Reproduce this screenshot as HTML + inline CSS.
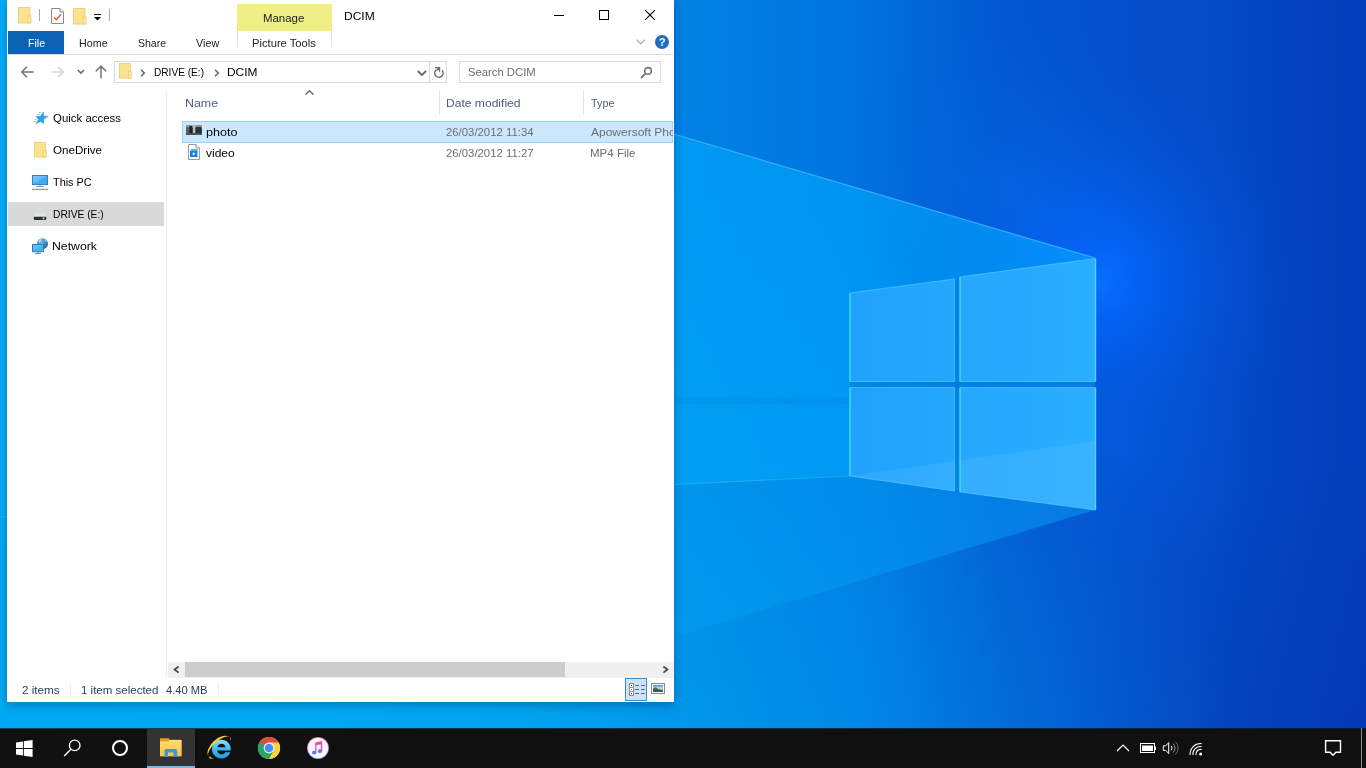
<!DOCTYPE html>
<html>
<head>
<meta charset="utf-8">
<title>DCIM</title>
<style>
*{box-sizing:border-box;margin:0;padding:0}
html,body{width:1366px;height:768px;overflow:hidden;background:#0a64d0;font-family:"Liberation Sans",sans-serif;font-size:12px;color:#000}
.abs{position:absolute}
#wall{position:absolute;left:0;top:0;width:1366px;height:728px}
#win{position:absolute;left:7px;top:0;width:667px;height:702px;background:#fff;box-shadow:0 3px 9px rgba(0,30,80,.34)}
#taskbar{position:absolute;left:0;top:728px;width:1366px;height:40px;background:#101010}
.t{position:absolute;white-space:nowrap;font-size:11.5px;line-height:14px;height:14px;transform-origin:0 0}
.tab{color:#222}
.nav{color:#000}
.hdr{color:#4c607a}
.gry{color:#6d6d6d}
</style>
</head>
<body>
<!-- WALLPAPER -->
<svg id="wall" viewBox="0 0 1366 728">
<defs>
<linearGradient id="bg" x1="0" y1="0" x2="1366" y2="0" gradientUnits="userSpaceOnUse">
<stop offset="0" stop-color="#00aaf4"/>
<stop offset="0.25" stop-color="#00a8f0"/>
<stop offset="0.38" stop-color="#009cec"/>
<stop offset="0.493" stop-color="#0082e4"/>
<stop offset="0.622" stop-color="#0074e0"/>
<stop offset="0.732" stop-color="#0258d0"/>
<stop offset="0.805" stop-color="#0450cc"/>
<stop offset="0.878" stop-color="#044cc8"/>
<stop offset="1" stop-color="#043cba"/>
</linearGradient>
<radialGradient id="bl" cx="500" cy="900" r="760" gradientUnits="userSpaceOnUse">
<stop offset="0" stop-color="#00a8f0" stop-opacity=".82"/>
<stop offset="1" stop-color="#00a8f0" stop-opacity="0"/>
</radialGradient>
<radialGradient id="br" cx="1366" cy="760" r="300" gradientUnits="userSpaceOnUse">
<stop offset="0" stop-color="#0434a8" stop-opacity=".45"/>
<stop offset="1" stop-color="#0434a8" stop-opacity="0"/>
</radialGradient>
<radialGradient id="glow" cx="1098" cy="282" r="215" gradientUnits="userSpaceOnUse">
<stop offset="0" stop-color="#0a70ff" stop-opacity=".95"/>
<stop offset=".16" stop-color="#0468ff" stop-opacity=".80"/>
<stop offset=".5" stop-color="#0462f4" stop-opacity=".36"/>
<stop offset=".78" stop-color="#0458e0" stop-opacity=".12"/>
<stop offset="1" stop-color="#0450d0" stop-opacity="0"/>
</radialGradient>
<radialGradient id="glow2" cx="1120" cy="445" r="135" gradientUnits="userSpaceOnUse">
<stop offset="0" stop-color="#0462e8" stop-opacity=".55"/>
<stop offset="1" stop-color="#0458d8" stop-opacity="0"/>
</radialGradient>
<radialGradient id="glow3" cx="1010" cy="185" r="170" gradientUnits="userSpaceOnUse">
<stop offset="0" stop-color="#0870e6" stop-opacity=".45"/>
<stop offset="1" stop-color="#0460d8" stop-opacity="0"/>
</radialGradient>
<linearGradient id="beam" x1="674" y1="0" x2="1095" y2="0" gradientUnits="userSpaceOnUse">
<stop offset="0" stop-color="#00b0ff" stop-opacity=".50"/>
<stop offset=".6" stop-color="#00aeff" stop-opacity=".56"/>
<stop offset="1" stop-color="#08a8ff" stop-opacity=".60"/>
</linearGradient>
<linearGradient id="beamlo" x1="520" y1="0" x2="1095" y2="0" gradientUnits="userSpaceOnUse">
<stop offset="0" stop-color="#00acfc" stop-opacity="0"/>
<stop offset=".25" stop-color="#00acfc" stop-opacity=".2"/>
<stop offset="1" stop-color="#08a8fc" stop-opacity=".46"/>
</linearGradient>
<linearGradient id="pane" x1="850" y1="0" x2="1095" y2="0" gradientUnits="userSpaceOnUse">
<stop offset="0" stop-color="#20a2fc"/>
<stop offset="1" stop-color="#2aaeff"/>
</linearGradient>
</defs>
<rect width="1366" height="728" fill="url(#bg)"/>
<rect width="1366" height="728" fill="url(#bl)"/>
<rect width="1366" height="728" fill="url(#br)"/>
<rect width="1366" height="728" fill="url(#glow3)"/>
<rect width="1366" height="728" fill="url(#glow2)"/>
<rect width="1366" height="728" fill="url(#glow)"/>
<!-- light cone -->
<polygon points="0,-64 1095,258 1095,510 850,476 0,517" fill="url(#beam)"/>
<polygon points="0,517 850,476 1095,510 0,840" fill="url(#beamlo)"/>
<line x1="0" y1="-64" x2="1095" y2="258" stroke="#48c0ff" stroke-width="1.2" opacity=".7"/>
<line x1="0" y1="517" x2="850" y2="476" stroke="#40c0ff" stroke-width="1.2" opacity=".45"/>
<rect x="674" y="397" width="178" height="7" fill="#0668d0" opacity=".12"/>
<!-- logo panes -->
<rect x="850" y="382" width="245.500" height="5.500" fill="#0670d8" opacity=".45"/>
<polygon points="955,279 960,277 960,492 955,491" fill="#0670d8" opacity=".35"/>
<g fill="url(#pane)">
<polygon points="850,293 954.5,279 954.5,381.5 850,381.5"/>
<polygon points="960,277 1095.5,258.5 1095.5,381.5 960,381.5"/>
<polygon points="850,387.5 954.5,387.5 954.5,491 850,476"/>
<polygon points="960,387.5 1095.5,387.5 1095.5,510 960,492"/>
</g>
<path d="M850,476L954.500,461V491ZM960,460.300L1095.500,441V510L960,492Z" fill="#fff" opacity=".07"/>
<g fill="none" stroke="#6cd0ff" stroke-width="1" opacity=".55">
<path d="M850,293L954.500,279V381.500H850M960,277L1095.500,258.500M960,381.500H1095.500M850,387.500H954.500V491L850,476M960,387.500H1095.500M1095.500,510L960,492"/>
</g>
<g fill="none" stroke="#44dcf2" stroke-width="1.500">
<path d="M850,293V381.500M850,387.500V476M960,277V381.500M960,387.500V492" opacity=".95"/>
<path d="M1095.500,258.500V381.500M1095.500,387.500V510" stroke="#5ad8ff" opacity=".9"/>
</g>
</svg>

<!-- WINDOW -->
<div id="win">
<svg class="abs" style="left:11px;top:7px" width="14" height="17" viewBox="0 0 14 17"><rect x=".5" y=".5" width="11.5" height="15.5" fill="#fbe28e" stroke="#ecd078"/><rect x="10" y="9" width="3" height="7" fill="#fce9a6" stroke="#ecd078"/></svg>
<div class="abs" style="left:32px;top:9px;width:1px;height:12px;background:#a9a9a9"></div>
<svg class="abs" style="left:44px;top:8px" width="13" height="16" viewBox="0 0 13 16"><path d="M.5.5H9L12.5 4V15.5H.5Z" fill="#fff" stroke="#8a8a8a"/><path d="M9 .5V4H12.5" fill="#f2f2f2" stroke="#8a8a8a"/><path d="M3 9.2L5.3 11.6L10 6.2" fill="none" stroke="#e8622c" stroke-width="1.5"/></svg>
<svg class="abs" style="left:66px;top:8px" width="14" height="17" viewBox="0 0 14 17"><rect x=".5" y=".5" width="11.5" height="15.5" fill="#fbe28e" stroke="#ecd078"/><rect x="10" y="9" width="3" height="7" fill="#fce9a6" stroke="#ecd078"/></svg>
<svg class="abs" style="left:87px;top:13px" width="8" height="8" viewBox="0 0 8 8"><rect x="0" y="1" width="7" height="1" fill="#000"/><path d="M0 4H7L3.5 7.5Z" fill="#000"/></svg>
<div class="abs" style="left:102px;top:9px;width:1px;height:12px;background:#a9a9a9"></div>
<div class="abs" style="left:230px;top:4px;width:95px;height:27px;background:#f0ee86"></div>
<span class="t tab" style="left:255.60px;top:11.40px;transform:scaleX(0.9937);">Manage</span>
<span class="t " style="left:337.00px;top:9.10px;transform:scaleX(1.0431);">DCIM</span>
<div class="abs" style="left:547px;top:15px;width:10px;height:1px;background:#000"></div>
<div class="abs" style="left:592px;top:10px;width:10px;height:10px;border:1px solid #000"></div>
<svg class="abs" style="left:638px;top:10px" width="10" height="10" viewBox="0 0 10 10"><path d="M0 0L10 10M10 0L0 10" stroke="#000" stroke-width="1.1"/></svg>
<div class="abs" style="left:1px;top:31px;width:56px;height:23px;background:#0c63b4"></div>
<span class="t " style="left:20.60px;top:36.20px;transform:scaleX(0.9172);color:#fff">File</span>
<span class="t tab" style="left:71.70px;top:36.20px;transform:scaleX(0.9320);">Home</span>
<span class="t tab" style="left:130.50px;top:36.20px;transform:scaleX(0.9122);">Share</span>
<span class="t tab" style="left:188.50px;top:36.20px;transform:scaleX(0.9436);">View</span>
<div class="abs" style="left:230px;top:31px;width:95px;height:19px;border-left:1px solid #dadbdc;border-right:1px solid #dadbdc;-webkit-mask-image:linear-gradient(#000 40%,transparent);mask-image:linear-gradient(#000 40%,transparent)"></div>
<span class="t tab" style="left:244.50px;top:36.20px;transform:scaleX(0.9737);">Picture Tools</span>
<svg class="abs" style="left:628.5px;top:39px" width="10" height="6" viewBox="0 0 10 6"><path d="M.5.7L4.7 4.9L8.9.7" fill="none" stroke="#a8a8a8" stroke-width="1.2"/></svg>
<div class="abs" style="left:648px;top:35px;width:14px;height:14px;border-radius:7px;background:#1b6ec2;color:#fff;font-weight:bold;font-size:11px;line-height:14px;text-align:center">?</div>
<div class="abs" style="left:1px;top:54px;width:665px;height:1px;background:#dadbdc"></div>
<svg class="abs" style="left:13.5px;top:66px" width="13" height="12" viewBox="0 0 13 12"><path d="M6 .8L.9 6L6 11.2M1 6H12.6" fill="none" stroke="#737373" stroke-width="1.5"/></svg>
<svg class="abs" style="left:43.5px;top:66px" width="13" height="12" viewBox="0 0 13 12"><path d="M7 .8L12.1 6L7 11.2M12 6H.4" fill="none" stroke="#d6d6d6" stroke-width="1.5"/></svg>
<svg class="abs" style="left:69.5px;top:69px" width="8" height="6" viewBox="0 0 8 6"><path d="M.8 1L3.9 4.1L7 1" fill="none" stroke="#707070" stroke-width="1.6"/></svg>
<svg class="abs" style="left:88px;top:65px" width="12" height="14" viewBox="0 0 12 14"><path d="M.8 6.3L6 1.1L11.2 6.3M6 1.3V13.4" fill="none" stroke="#737373" stroke-width="1.5"/></svg>
<div class="abs" style="left:107px;top:61px;width:333px;height:22px;border:1px solid #d9d9d9"></div>
<svg class="abs" style="left:112px;top:63px" width="13.2" height="16" viewBox="0 0 14 17"><rect x=".5" y=".5" width="11.5" height="15.5" fill="#fbe28e" stroke="#ecd078"/><rect x="10" y="9" width="3" height="7" fill="#fce9a6" stroke="#ecd078"/></svg>
<svg class="abs" style="left:133px;top:69px" width="6" height="8" viewBox="0 0 6 8"><path d="M1 .8L4.3 4L1 7.2" fill="none" stroke="#6a6a6a" stroke-width="1.6"/></svg>
<span class="t " style="left:147.30px;top:65.10px;transform:scaleX(0.8792);">DRIVE (E:)</span>
<svg class="abs" style="left:207px;top:69px" width="6" height="8" viewBox="0 0 6 8"><path d="M1 .8L4.3 4L1 7.2" fill="none" stroke="#6a6a6a" stroke-width="1.6"/></svg>
<span class="t " style="left:220.00px;top:65.10px;transform:scaleX(1.0361);">DCIM</span>
<svg class="abs" style="left:410px;top:70px" width="10" height="7" viewBox="0 0 10 7"><path d="M.8 1L4.9 5.1L9 1" fill="none" stroke="#666" stroke-width="1.8"/></svg>
<div class="abs" style="left:422px;top:62px;width:1px;height:20px;background:#d9d9d9"></div>
<svg class="abs" style="left:426px;top:65px" width="12" height="14" viewBox="433 65 12 14"><path d="M442.1 70.3A4.2 4.2 0 1 1 436 70.1" fill="none" stroke="#6b6b6b" stroke-width="1.5"/><path d="M435 67.6H439.5V71.8M436.3 70.6L439.3 67.8" fill="none" stroke="#6b6b6b" stroke-width="1.4"/></svg>
<div class="abs" style="left:452px;top:61px;width:202px;height:22px;border:1px solid #d9d9d9"></div>
<span class="t gry" style="left:461.20px;top:65.10px;transform:scaleX(0.9808);">Search DCIM</span>
<svg class="abs" style="left:633px;top:66px" width="13" height="13" viewBox="0 0 13 13"><circle cx="8" cy="4.900" r="3.300" fill="none" stroke="#767676" stroke-width="1.600"/><path d="M5.600 7.400L1 12" stroke="#767676" stroke-width="1.900"/></svg>
<svg class="abs" style="left:298px;top:90px" width="9" height="5" viewBox="0 0 9 5"><path d="M.5 4.5L4.5.7L8.5 4.5" fill="none" stroke="#5a5a5a" stroke-width="1.2"/></svg>
<span class="t hdr" style="left:177.60px;top:95.80px;transform:scaleX(1.0778);">Name</span>
<span class="t hdr" style="left:438.60px;top:95.80px;transform:scaleX(1.0503);">Date modified</span>
<span class="t hdr" style="left:583.70px;top:95.80px;transform:scaleX(0.9384);">Type</span>
<div class="abs" style="left:432px;top:90px;width:1px;height:25px;background:#e5e5e5"></div>
<div class="abs" style="left:576px;top:90px;width:1px;height:25px;background:#e5e5e5"></div>
<div class="abs" style="left:159px;top:90px;width:1px;height:588px;background:#f0f0f0"></div>
<div class="abs" style="left:1px;top:202px;width:156px;height:24px;background:#d9d9d9"></div>
<svg class="abs" style="left:25px;top:110px" width="18" height="16" viewBox="32 110 18 16"><path d="M43.30 112.10L43.59 116.22L47.80 116.30L43.65 119.36L43.50 123.50L40.46 121.39L36.20 123.70L38.42 119.42L36.10 116.30L40.38 116.22Z" fill="#2da2f2" stroke="#1f8ad8" stroke-width=".5"/><path d="M38.800 112.500H41.200M37.500 114.500H39.900M34.700 119.500H36.700M33.300 121.500H35.900" stroke="#8cc0e8" stroke-width=".9"/></svg>
<span class="t " style="left:46.00px;top:111.00px;transform:scaleX(0.9944);">Quick access</span>
<svg class="abs" style="left:27px;top:142px" width="13.2" height="16" viewBox="0 0 14 17"><rect x=".5" y=".5" width="11.5" height="15.5" fill="#fbe28e" stroke="#ecd078"/><rect x="10" y="9" width="3" height="7" fill="#fce9a6" stroke="#ecd078"/></svg>
<span class="t " style="left:46.00px;top:142.90px;transform:scaleX(1.0088);">OneDrive</span>
<svg class="abs" style="left:24px;top:174px" width="18" height="17" viewBox="31 174 18 17"><defs><linearGradient id="scr" x1="0" y1="0" x2="1" y2="1"><stop offset="0" stop-color="#84ccfc"/><stop offset=".5" stop-color="#5cb8f8"/><stop offset=".52" stop-color="#44acf6"/><stop offset="1" stop-color="#38a6f6"/></linearGradient></defs><rect x="32.500" y="175.500" width="15" height="9" fill="url(#scr)" stroke="#3a80b2"/><rect x="39" y="185" width="2" height="1" fill="#9cc4e4"/><rect x="36" y="186" width="8" height="1" fill="#7c9cba"/><rect x="32" y="188" width="16" height="1" fill="#dde4ea"/><rect x="32" y="189" width="16" height="1" fill="#8fa0b0"/></svg>
<span class="t " style="left:46.00px;top:174.90px;transform:scaleX(0.9436);">This PC</span>
<svg class="abs" style="left:26px;top:212px" width="14" height="9" viewBox="33 212 14 9"><path d="M35.300 213.200H44.700L46.100 217H33.900Z" fill="#e6e6e6"/><rect x="33.900" y="216.800" width="12.200" height="3.200" rx=".4" fill="#2a2a2a"/><rect x="34.500" y="218" width="7.500" height=".5" fill="#4a4a4a"/><circle cx="43.500" cy="218.400" r="1.600" fill="#2f9a3c" opacity=".7"/><circle cx="43.500" cy="218.400" r=".9" fill="#7cf08a"/></svg>
<span class="t " style="left:46.00px;top:206.90px;transform:scaleX(0.8917);">DRIVE (E:)</span>
<svg class="abs" style="left:24px;top:237px" width="18" height="18" viewBox="31 237 18 18"><defs><radialGradient id="glb" cx=".35" cy=".3" r=".8"><stop offset="0" stop-color="#7cc0e4"/><stop offset=".6" stop-color="#3c88b8"/><stop offset="1" stop-color="#28587c"/></radialGradient></defs><circle cx="42.500" cy="243.700" r="5.500" fill="url(#glb)"/><path d="M38.600 241.800C39.200 239.800 40.800 238.900 42 239C41.600 240 40.600 240.300 40.400 241.400C40 242.300 39.200 242.400 38.600 241.800ZM44.600 239.300C46 239.800 47 241 47.400 242.400C46.600 242.200 46.300 241.200 45.400 240.800C44.800 240.300 44.400 239.900 44.600 239.300Z" fill="#c4e8f8" opacity=".9"/><rect x="32.500" y="244.500" width="11" height="7.200" fill="#4cb0f6" stroke="#2e7eb8"/><path d="M33 245H43L33 251Z" fill="#6cc0fa" opacity=".6"/><rect x="37" y="252" width="2" height="1" fill="#8cb8dc"/><rect x="35" y="253" width="6" height="1" fill="#7a8a9a"/></svg>
<span class="t " style="left:45.00px;top:238.90px;transform:scaleX(1.0669);">Network</span>
<div class="abs" style="left:175px;top:121px;width:491px;height:22px;background:#cce8ff;border:1px solid #99d1ff"></div>
<svg class="abs" style="left:179px;top:125px" width="16" height="10" viewBox="0 0 16 10"><rect width="16" height="10" fill="#3a4248"/><rect x="0" y="0" width="16" height="2.5" fill="#8c969c"/><rect x="3.5" y="1" width="2.5" height="7" fill="#1e2428"/><rect x="7" y="0" width="2.2" height="8" fill="#b8c0c4"/><rect x="10" y="2" width="5" height="6" fill="#2a3238"/><rect x="0" y="8" width="16" height="2" fill="#4a5258"/><rect x="0" y="3" width="3" height="5" fill="#5a646a"/></svg>
<span class="t " style="left:199.30px;top:125.40px;transform:scaleX(1.0946);">photo</span>
<span class="t gry" style="left:439.30px;top:125.40px;transform:scaleX(0.9867);">26/03/2012 11:34</span>
<div class="abs" style="left:583.7px;top:125px;width:81.9px;height:14px;overflow:hidden"><span class="t gry" style="left:0;top:.36px;transform:scaleX(1.0435)">Apowersoft Photo Viewer</span></div>
<svg class="abs" style="left:181px;top:144px" width="12" height="16" viewBox="0 0 12 16"><path d="M.5.5H8L11.5 4V15.5H.5Z" fill="#fff" stroke="#9a9a9a"/><path d="M8 .5V4H11.5" fill="#f0f0f0" stroke="#9a9a9a"/><rect x="2" y="6.5" width="7.5" height="6.5" fill="#1b7fd6"/><rect x="3.2" y="5" width="6.5" height="2" fill="#58b0f0"/><path d="M4.8 8.2L7.6 9.8L4.8 11.4Z" fill="#fff"/></svg>
<span class="t " style="left:199.00px;top:146.00px;transform:scaleX(1.0438);">video</span>
<span class="t gry" style="left:439.30px;top:146.00px;transform:scaleX(0.9867);">26/03/2012 11:27</span>
<span class="t gry" style="left:582.70px;top:146.00px;transform:scaleX(1.0015);">MP4 File</span>
<div class="abs" style="left:161px;top:662px;width:505px;height:16px;background:#f0f0f0"></div>
<div class="abs" style="left:178px;top:662px;width:380px;height:15px;background:#cdcdcd"></div>
<svg class="abs" style="left:165.5px;top:666px" width="7" height="8" viewBox="0 0 7 8"><path d="M5.6 .6L1.6 3.6L5.6 6.6" fill="none" stroke="#454545" stroke-width="1.8"/></svg>
<svg class="abs" style="left:654.5px;top:666px" width="7" height="8" viewBox="0 0 7 8"><path d="M1.4 .6L5.4 3.6L1.4 6.6" fill="none" stroke="#454545" stroke-width="1.8"/></svg>
<span class="t " style="left:15.20px;top:683.10px;transform:scaleX(1.0141);color:#1e395b">2 items</span>
<div class="abs" style="left:63px;top:684px;width:1px;height:11px;background:#ececec"></div>
<span class="t " style="left:74.40px;top:683.10px;transform:scaleX(1.0009);color:#1e395b">1 item selected</span>
<span class="t " style="left:158.90px;top:683.10px;transform:scaleX(0.9688);color:#1e395b">4.40 MB</span>
<div class="abs" style="left:211px;top:684px;width:1px;height:11px;background:#ececec"></div>
<div class="abs" style="left:618px;top:678px;width:22px;height:23px;background:#cce4f6;border:1px solid #3d8cc2"></div>
<svg class="abs" style="left:622px;top:683px" width="17" height="14" viewBox="629 683 17 14"><rect x="629.500" y="683.500" width="4" height="12" fill="#fff" stroke="#8e8e8e"/><rect x="630" y="687" width="3" height="1" fill="#9a9a9a"/><rect x="630" y="691" width="3" height="1" fill="#9a9a9a"/><rect x="631" y="685" width="1" height="1" fill="#7a2a2a"/><rect x="631" y="689" width="1" height="1" fill="#8494b4"/><rect x="631" y="693" width="1" height="1" fill="#7a2a2a"/><g fill="#5a6a7a"><rect x="635" y="685" width="4" height="1"/><rect x="641" y="685" width="4" height="1"/><rect x="635" y="689" width="4" height="1"/><rect x="641" y="689" width="4" height="1"/><rect x="635" y="693" width="4" height="1"/><rect x="641" y="693" width="4" height="1"/></g></svg>
<svg class="abs" style="left:644px;top:683px" width="14" height="11" viewBox="651 683 14 11"><defs><linearGradient id="sky" x1="0" y1="0" x2="0" y2="1"><stop offset="0" stop-color="#4f88d0"/><stop offset=".45" stop-color="#d0e2f2"/><stop offset=".7" stop-color="#7a9cb8"/><stop offset="1" stop-color="#2c4c70"/></linearGradient></defs><rect x="651.500" y="683.500" width="13" height="10" fill="#fff" stroke="#8a8a8a"/><rect x="653" y="685" width="10" height="7" fill="url(#sky)"/><path d="M653 692V688.500L655.500 687.300L659 689.500L663 691V692Z" fill="#2f5a48" opacity=".85"/></svg>
</div>

<!-- TASKBAR -->
<div id="taskbar">
<div class="abs" style="left:0;top:0;width:1366px;height:1px;background:linear-gradient(90deg,#0a4468,#06305c 50%,#03184a)"></div>
<svg class="abs" style="left:16px;top:12px" width="17" height="17" viewBox="0 0 17 17"><path d="M0 2.4L6.9 1.4V8H0ZM7.8 1.3L16.6 0V8H7.8ZM0 8.9H6.9V15.5L0 14.5ZM7.8 8.9H16.6V17L7.8 15.7Z" fill="#fff"/></svg>
<svg class="abs" style="left:62px;top:10px" width="20" height="20" viewBox="62 738 20 20"><circle cx="74.7" cy="745.4" r="5.3" fill="none" stroke="#fff" stroke-width="1.3"/><path d="M70.9 749.3L64.2 756" stroke="#fff" stroke-width="1.4"/></svg>
<div class="abs" style="left:112px;top:12px;width:16px;height:16px;border-radius:8px;border:2px solid #fff"></div>
<div class="abs" style="left:147px;top:1px;width:48px;height:39px;background:#333"></div>
<div class="abs" style="left:147px;top:38px;width:48px;height:2px;background:#76b9ed"></div>
<svg class="abs" style="left:159px;top:10px" width="24" height="20" viewBox="159 738 24 20"><defs><linearGradient id="fb" x1="0" y1="0" x2="0" y2="1"><stop offset="0" stop-color="#ffdc70"/><stop offset="1" stop-color="#f8c648"/></linearGradient></defs><path d="M160 738.200H168.600L169.800 739.700H181.500V756.200H160Z" fill="#e3a11c"/><path d="M160 741.400H168.400L169.600 739.900H181.500V756.200H160Z" fill="url(#fb)"/><path d="M164.4 757V750.6Q164.4 749 166 749H175.6Q177.2 749 177.2 750.6V757H173.5V752.6H168V757Z" fill="#3d97df"/></svg>
<svg class="abs" style="left:207px;top:7px" width="26" height="26" viewBox="207 735 26 26"><defs><linearGradient id="ie" x1="0" y1="0" x2="0" y2="1"><stop offset="0" stop-color="#8be0fb"/><stop offset=".5" stop-color="#3dbbf1"/><stop offset="1" stop-color="#1c9ce4"/></linearGradient></defs><path d="M230.6 750.4H217.3C217.5 752.8 219.3 754.3 221.6 754.3C223.3 754.3 224.7 753.5 225.4 752.2H230.2C229 756 225.6 758.5 221.4 758.5C216.2 758.5 212 754.4 212 749.2C212 744 216.200 739.8 221.400 739.8C226.600 739.8 230.8 744 230.8 749.2C230.8 749.6 230.700 750 230.600 750.4ZM217.4 747.3H225.600C225.3 745.2 223.600 743.800 221.500 743.800C219.400 743.800 217.700 745.200 217.400 747.300Z" fill="url(#ie)"/><defs><linearGradient id="ier" x1="0" y1="0" x2="1" y2="1"><stop offset="0" stop-color="#ffe27a"/><stop offset=".5" stop-color="#f2c226"/><stop offset="1" stop-color="#d89c0c"/></linearGradient></defs><path d="M230.3 737.6A14.300 8.500 -42 0 0 209 757.200A14.300 6.300 -42 0 1 230.300 737.600Z" fill="url(#ier)"/><path d="M209 757.200C209.300 758.900 211.800 759.200 214.200 758.100C212.300 758.100 210.600 757.900 210.300 756.200Z" fill="#e0a818"/><path d="M230.300 737.600C231.200 738.600 231.100 740 230.700 741.300C230.600 739.800 230.400 738.700 229.600 738Z" fill="#e0a818"/></svg>
<svg class="abs" style="left:257px;top:8px" width="24" height="24" viewBox="-12 -12 24 24"><circle r="11.1" fill="#fdd23f"/><path d="M0 0L-9.61 -5.55A11.1 11.1 0 0 1 9.61 -5.55Z" fill="#e2493a"/><path d="M0 0L-9.61 -5.55A11.1 11.1 0 0 0 0 11.1L4.6 2.6Z" fill="#22a565"/><path d="M0 0L9.61 -5.55L0 -5.55Z" fill="#e2493a"/><path d="M-9.61 -5.55L-4.7 2.7L0 0Z" fill="#22a565"/><path d="M0 11.1L4.7 2.7L0 0L-4.7 2.7Z" fill="#22a565"/><path d="M0 11.1A11.1 11.1 0 0 0 9.61 -5.55H0L4.7 2.7Z" fill="#fdd23f"/><circle r="5.4" fill="#f4f8fc"/><circle r="4.3" fill="#4a8af4"/></svg>
<svg class="abs" style="left:306px;top:8px" width="24" height="24" viewBox="-12 -12 24 24"><defs><linearGradient id="itr" x1="0" y1="0" x2="0" y2="1"><stop offset="0" stop-color="#f45d8c"/><stop offset=".5" stop-color="#c45ae0"/><stop offset="1" stop-color="#3ab0f0"/></linearGradient><linearGradient id="itn" x1="0" y1="0" x2="0" y2="1"><stop offset="0" stop-color="#f4506a"/><stop offset=".55" stop-color="#c050d0"/><stop offset="1" stop-color="#3a8cf0"/></linearGradient></defs><circle r="11" fill="url(#itr)"/><circle r="10.300" fill="#f8f5fa"/><path d="M-2.800 -5.400L4.200 -7V3.200A2.200 1.800 0 1 1 2.800 1.500V-3.800L-1.600 -2.800V4.800A2.200 1.800 0 1 1 -2.800 3.100Z" fill="url(#itn)"/></svg>
<svg class="abs" style="left:1116px;top:16px" width="14" height="8" viewBox="0 0 14 8"><path d="M1 7L7 1L13 7" fill="none" stroke="#fff" stroke-width="1.2"/></svg>
<svg class="abs" style="left:1139px;top:15px" width="18" height="11" viewBox="1139 743 18 11"><rect x="1140.500" y="743.500" width="14" height="9" fill="none" stroke="#fff" stroke-width="1"/><rect x="1142" y="745.500" width="11" height="5.500" fill="#fff"/><rect x="1155" y="746.500" width="1" height="3.500" fill="#fff"/></svg>
<svg class="abs" style="left:1162px;top:13px" width="18" height="14" viewBox="1162 741 18 14"><path d="M1163.300 745.800H1165.800L1168.700 742.600V753.600L1165.800 750.400H1163.300Z" fill="none" stroke="#fff" stroke-width="1"/><path d="M1171 745.800A3.200 3.200 0 0 1 1171 750.400" fill="none" stroke="#fff" stroke-width="1"/><path d="M1173 743.600A6 6 0 0 1 1173 752.600" fill="none" stroke="#9a9a9a" stroke-width="1"/><path d="M1175.300 741.600A9 9 0 0 1 1175.300 754.600" fill="none" stroke="#6a6a6a" stroke-width="1"/></svg>
<svg class="abs" style="left:1188px;top:13.5px" width="16" height="15" viewBox="1188 741.500 16 15"><circle cx="1200.600" cy="753.600" r="1.500" fill="#fff"/><g fill="none" stroke="#fff" stroke-width="1.100"><path d="M1196 754.500A4.700 4.700 0 0 1 1201.600 749"/><path d="M1193 754.500A7.700 7.700 0 0 1 1201.600 746"/><path d="M1190.100 754.500A10.600 10.600 0 0 1 1201.600 743.100"/></g></svg>
<svg class="abs" style="left:1324px;top:11px" width="18" height="18" viewBox="1324 739 18 18"><path d="M1325.600 740.700H1340.500V752.300H1336L1333 755.300L1330 752.300H1325.600Z" fill="none" stroke="#fff" stroke-width="1.400"/></svg>
<div class="abs" style="left:1361px;top:0;width:1px;height:40px;background:#8c8c8c"></div>
</div>
</body>
</html>
